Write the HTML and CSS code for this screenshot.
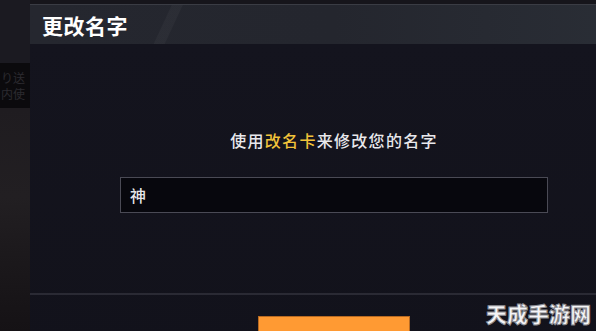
FILE: index.html
```html
<!DOCTYPE html>
<html lang="zh">
<head>
<meta charset="utf-8">
<link rel="stylesheet" href="styles.css">
</head>
<body>
<div class="scene">
  <div class="side">
    <div class="side-top"></div>
    <div class="side-box"><span>り送</span><span>内使</span></div>
    <div class="side-rest"></div>
  </div>
  <div class="dialog">
    <div class="header"><h1 class="title">更改名字</h1></div>
    <div class="content">
      <p class="hint">使用<span class="accent">改名卡</span>来修改您的名字</p>
      <div class="input">神</div>
      <div class="divider"></div>
      <div class="actions"><div class="btn"></div></div>
    </div>
  </div>
  <div class="watermark">天成手游网</div>
</div>
</body>
</html>
```
FILE: styles.css
```css
html, body {
  margin: 0;
  padding: 0;
  width: 596px;
  height: 331px;
  overflow: hidden;
  background: #16151b;
  font-family: "Noto Sans CJK SC", "Noto Sans", sans-serif;
}
.scene {
  position: relative;
  display: flex;
  width: 596px;
  height: 331px;
  overflow: hidden;
}
.side {
  width: 30px;
  flex: none;
  display: flex;
  flex-direction: column;
}
.side-top {
  height: 63px;
  flex: none;
  background: #1b1a21;
}
.side-box {
  height: 45px;
  flex: none;
  background: #0b0a0d;
  display: flex;
  flex-direction: column;
  justify-content: center;
  gap: 2px;
  color: #2c2a30;
  font-size: 12px;
  line-height: 14px;
  padding-left: 1px;
  white-space: nowrap;
  overflow: hidden;
}
.side-rest {
  flex: 1;
  background: linear-gradient(180deg, #1f1c20 0%, #221f22 40%, #1b181b 70%, #151215 100%);
}
.dialog {
  width: 608px;
  flex: none;
  margin-top: 4px;
  display: flex;
  flex-direction: column;
  background: #13131d;
}
.header {
  height: 40px;
  flex: none;
  box-sizing: border-box;
  border-top: 1px solid #3a3c44;
  background:
    linear-gradient(115deg, transparent 0, transparent 128px, rgba(255,255,255,0.03) 129px, rgba(255,255,255,0.03) 138px, transparent 139px),
    linear-gradient(90deg, #25272f 0%, #24262e 50%, #2a2e36 100%);
  display: flex;
  align-items: center;
  padding-left: 12px;
}
.title {
  margin: 0;
  color: #ffffff;
  font-size: 21px;
  font-weight: 700;
  line-height: 22px;
  letter-spacing: 0.5px;
}
.content {
  flex: 1;
  display: flex;
  flex-direction: column;
  align-items: center;
  background: linear-gradient(180deg, #14141e 0%, #12121b 100%);
}
.hint {
  margin: 86px 0 0;
  flex: none;
  color: #e8e8ec;
  font-size: 16px;
  font-weight: 500;
  line-height: 20px;
  letter-spacing: 1.3px;
}
.accent {
  color: #f2c33a;
}
.input {
  flex: none;
  margin-top: 27px;
  width: 428px;
  height: 36px;
  box-sizing: border-box;
  border: 1px solid #4a4a55;
  background: #07070d;
  color: #e6e6ea;
  font-size: 16px;
  font-weight: 500;
  line-height: 34px;
  padding-left: 9px;
}
.divider {
  flex: none;
  margin-top: 80px;
  align-self: stretch;
  height: 2px;
  background: #2a2a34;
}
.actions {
  flex: none;
  margin-top: 21px;
  display: flex;
  justify-content: center;
}
.btn {
  width: 152px;
  height: 40px;
  box-sizing: border-box;
  border: 1px solid #b86a22;
  background: #ff9a33;
}
.watermark {
  position: absolute;
  left: 486px;
  top: 300px;
  font-size: 21px;
  font-weight: 900;
  line-height: 26px;
  color: #f4f4f6;
  -webkit-text-stroke: 1px #8a8a90;
}
```
